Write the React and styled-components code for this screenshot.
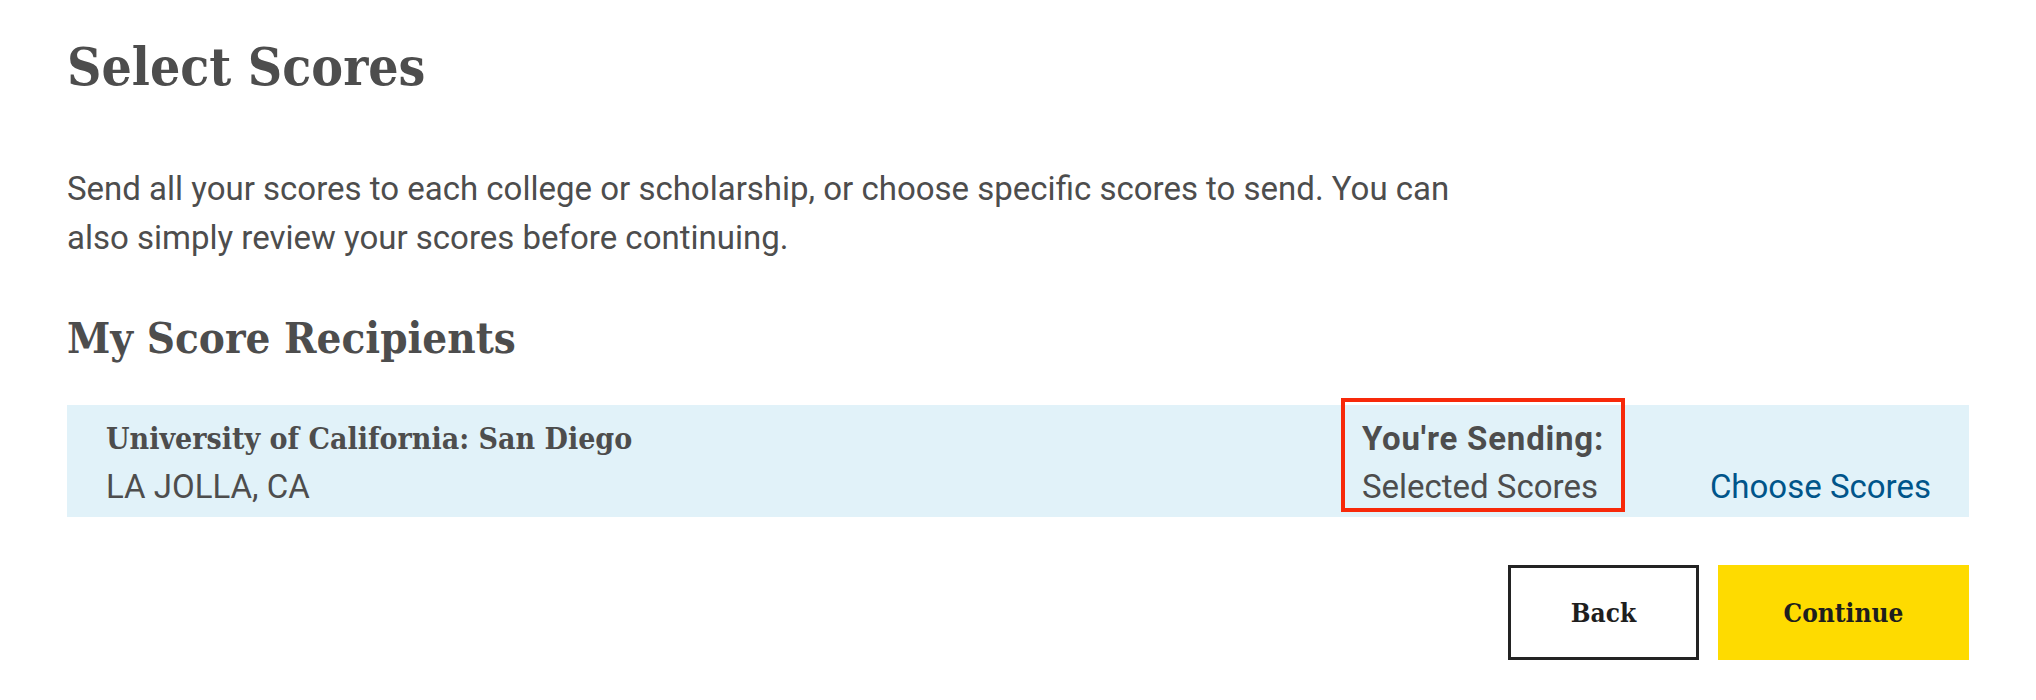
import React from "react";
import styled, { createGlobalStyle } from "styled-components";

const GlobalStyle = createGlobalStyle`
  body {
    margin: 0;
    background: #ffffff;
    font-family: Roboto, "Liberation Sans", sans-serif;
    color: #4d4d4d;
  }
`;

const slab = `"DejaVu Serif", "Liberation Serif", serif`;

const Page = styled.main`
  max-width: 1902px;
  margin: 0 auto;
  padding-top: 26px;
`;

const Title = styled.h1`
  margin: 0;
  font-family: ${slab};
  font-stretch: condensed;
  font-weight: 700;
  font-size: 53px;
  line-height: 80px;
  color: #4d4d4d;
`;

const Intro = styled.p`
  margin: 58px 0 0;
  max-width: 1420px;
  font-size: 33px;
  line-height: 49px;
  color: #4d4d4d;
`;

const SectionTitle = styled.h2`
  margin: 44px 0 0;
  font-family: ${slab};
  font-stretch: condensed;
  font-weight: 700;
  font-size: 43.5px;
  line-height: 64px;
  color: #4d4d4d;
`;

const RecipientRow = styled.div`
  display: grid;
  grid-template-columns: 1fr 348px auto;
  align-items: end;
  margin-top: 35px;
  padding: 10px 38px 6px 39px;
  background: #e1f2f9;
`;

const Name = styled.div`
  font-family: ${slab};
  font-stretch: condensed;
  font-weight: 700;
  font-size: 30px;
  line-height: 48px;
  color: #4d4d4d;
`;

const Line = styled.div`
  font-size: 33px;
  line-height: 48px;
  font-weight: ${(p) => (p.$bold ? 700 : 400)};
  letter-spacing: ${(p) => (p.$bold ? "0.8px" : "normal")};
  color: #4d4d4d;
`;

const SendingCell = styled.div`
  position: relative;

  &::after {
    content: "";
    position: absolute;
    left: -21px;
    top: -17px;
    width: 276px;
    height: 106px;
    border: 4px solid #f7290a;
    pointer-events: none;
  }
`;

const ChooseLink = styled.a`
  font-size: 33px;
  line-height: 48px;
  color: #00558a;
  text-decoration: none;
  cursor: pointer;
`;

const Actions = styled.div`
  display: flex;
  justify-content: flex-end;
  gap: 19px;
  margin-top: 48px;
`;

const Button = styled.button`
  width: ${(p) => p.$w}px;
  height: 95px;
  font-family: ${slab};
  font-stretch: condensed;
  font-weight: 700;
  font-size: 26px;
  color: #1e1e1e;
  cursor: pointer;
  border: ${(p) => (p.$primary ? "none" : "3px solid #232323")};
  background: ${(p) => (p.$primary ? "#fedb00" : "#ffffff")};
`;

export default function App() {
  return (
    <>
      <GlobalStyle />
      <Page>
        <Title>Select Scores</Title>
        <Intro>
          Send all your scores to each college or scholarship, or choose specific
          scores to send. You can also simply review your scores before continuing.
        </Intro>
        <SectionTitle>My Score Recipients</SectionTitle>
        <RecipientRow>
          <div>
            <Name>University of California: San Diego</Name>
            <Line>LA JOLLA, CA</Line>
          </div>
          <SendingCell>
            <Line $bold>You're Sending:</Line>
            <Line>Selected Scores</Line>
          </SendingCell>
          <ChooseLink>Choose Scores</ChooseLink>
        </RecipientRow>
        <Actions>
          <Button $w={191}>Back</Button>
          <Button $w={251} $primary>
            Continue
          </Button>
        </Actions>
      </Page>
    </>
  );
}
